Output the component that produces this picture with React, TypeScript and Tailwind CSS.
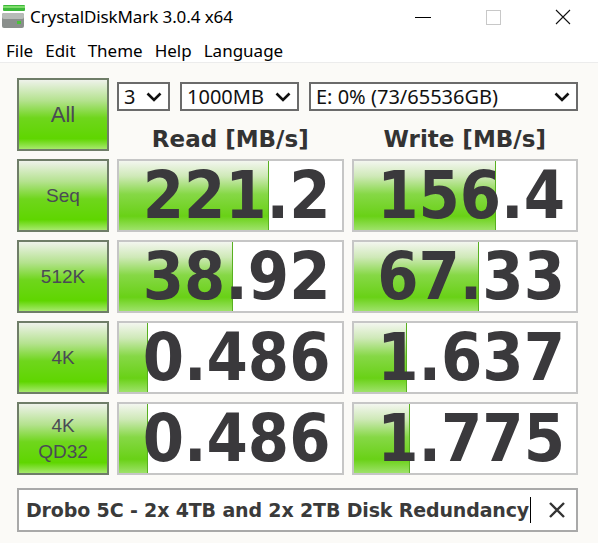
import React from "react";

type Row = {
  label: string[];
  read: string;
  readFill: number;
  write: string;
  writeFill: number;
};

const rows: Row[] = [
  { label: ["Seq"], read: "221.2", readFill: 150, write: "156.4", writeFill: 142 },
  { label: ["512K"], read: "38.92", readFill: 114, write: "67.33", writeFill: 125 },
  { label: ["4K"], read: "0.486", readFill: 29, write: "1.637", writeFill: 53 },
  { label: ["4K", "QD32"], read: "0.486", readFill: 29, write: "1.775", writeFill: 56 },
];

const numFont = {
  fontFamily: '"DejaVu Sans Condensed", "DejaVu Sans", Verdana, sans-serif',
};

const boldFont = {
  fontFamily: '"DejaVu Sans", Verdana, sans-serif',
};

const GreenButton = ({ lines, big }: { lines: string[]; big?: boolean }) => (
  <div className="w-[92px] h-[73px] shrink-0 border-2 border-[#6f7d68] bg-[linear-gradient(to_bottom,#eef2ea_0%,#b4e28e_30%,#6fd61c_55%,#5fd600_85%,#a6e96c_100%)] flex flex-col items-center justify-center text-[#4a4a55] leading-[26px]"
    style={{ fontFamily: '"Comic Sans MS", "Liberation Sans", sans-serif' }}
  >
    {lines.map((l) => (
      <span key={l} className={big ? "text-[22px]" : "text-[19px]"}>
        {l}
      </span>
    ))}
  </div>
);

const ResultCell = ({ value, fill }: { value: string; fill: number }) => (
  <div className="relative flex-1 h-[73px] border-2 border-[#c6c6c6] bg-white">
    <div
      className="absolute left-0 top-0 bottom-0 border-r border-[#58b020] bg-[linear-gradient(to_bottom,#f3f6ef_0%,#cfe9b8_22%,#86d846_48%,#69d116_80%,#9ee26a_100%)]"
      style={{ width: fill }}
    />
    <div
      className="relative h-full flex items-center justify-end pr-[11px] text-[66px] leading-[69px] font-bold text-[#3a393c]"
      style={numFont}
    >
      {value}
    </div>
  </div>
);

const Select = ({ value, w }: { value: string; w: string }) => (
  <div className={`${w} h-[29px] border-2 border-[#6b6b6b] bg-white flex items-center justify-between pl-[5px] pr-[6px] text-[20px] text-[#111]`}>
    <span className="leading-none">{value}</span>
    <svg width="16" height="10" viewBox="0 0 16 10">
      <path d="M1.5 1.5 L8 8 L14.5 1.5" fill="none" stroke="#111" strokeWidth="2.6" />
    </svg>
  </div>
);

export default function App() {
  return (
    <div
      className="w-[598px] h-[543px] bg-white overflow-hidden"
      style={{ fontFamily: '"Noto Sans", "Open Sans", sans-serif' }}
    >
      {/* title bar */}
      <div className="h-[40px] flex items-start pt-[4px] relative">
        <svg className="ml-[2px] mt-[1px]" width="24" height="24" viewBox="0 0 24 24">
          <rect x="1" y="0" width="22" height="6" rx="1" fill="#3cb93a" />
          <rect x="1" y="1" width="22" height="2" fill="#7fdc6c" />
          <rect x="0" y="8" width="22" height="15" rx="2" fill="#8a8f8c" />
          <rect x="0" y="8" width="22" height="6" rx="2" fill="#b7bbb8" />
          <rect x="15" y="16" width="4" height="3" fill="#49c23a" />
        </svg>
        <span className="ml-[4px] text-[17px] text-black tracking-[-0.1px]">CrystalDiskMark 3.0.4 x64</span>
        <div className="ml-auto flex items-center h-[26px]">
          <div className="w-[70px] flex justify-center">
            <div className="w-[16px] h-px bg-black" />
          </div>
          <div className="w-[70px] flex justify-center">
            <div className="w-[15px] h-[15px] border border-[#c8c8c8]" />
          </div>
          <div className="w-[70px] flex justify-center">
            <svg width="16" height="16" viewBox="0 0 16 16">
              <path d="M1 1 L15 15 M15 1 L1 15" stroke="#111" strokeWidth="1.1" />
            </svg>
          </div>
        </div>
      </div>

      {/* menu bar */}
      <div className="h-[23px] flex items-center gap-[12px] pl-[6px] text-[17px] text-black border-b border-[#ececec]">
        <span>File</span>
        <span>Edit</span>
        <span>Theme</span>
        <span>Help</span>
        <span>Language</span>
      </div>

      {/* main area */}
      <div className="h-[480px] bg-[#fbfaf7] pl-[17px] pr-[20px] pt-[15px]">
        <div className="flex gap-[8px]">
          <GreenButton lines={["All"]} big />
          <div className="flex-1 flex flex-col">
            <div className="mt-[4px] flex gap-[10px]">
              <Select value="3" w="w-[53px]" />
              <Select value="1000MB" w="w-[119px]" />
              <Select value="E: 0% (73/65536GB)" w="flex-1" />
            </div>
            <div className="flex gap-[8px] h-[40px] pt-[16px] items-center text-[23px] font-bold text-[#333]" style={boldFont}>
              <div className="flex-1 text-center">Read [MB/s]</div>
              <div className="flex-1 text-center">Write [MB/s]</div>
            </div>
          </div>
        </div>

        <div className="mt-[8px] flex flex-col gap-[8px]">
          {rows.map((r, i) => (
            <div key={i} className="flex gap-[8px]">
              <GreenButton lines={r.label} />
              <ResultCell value={r.read} fill={r.readFill} />
              <ResultCell value={r.write} fill={r.writeFill} />
            </div>
          ))}
        </div>

        <div className="mt-[13px] h-[44px] border-2 border-[#a9a9a9] bg-white flex items-center pl-[7px] pr-[10px]">
          <span className="text-[19px] font-bold text-[#3a3a3a] tracking-[-0.15px]" style={boldFont}>
            Drobo 5C - 2x 4TB and 2x 2TB Disk Redundancy
          </span>
          <span className="ml-[1px] w-px h-[26px] bg-black" />
          <svg className="ml-auto" width="18" height="18" viewBox="0 0 18 18">
            <path d="M2 2 L16 16 M16 2 L2 16" stroke="#333" strokeWidth="2.4" />
          </svg>
        </div>
      </div>
    </div>
  );
}
